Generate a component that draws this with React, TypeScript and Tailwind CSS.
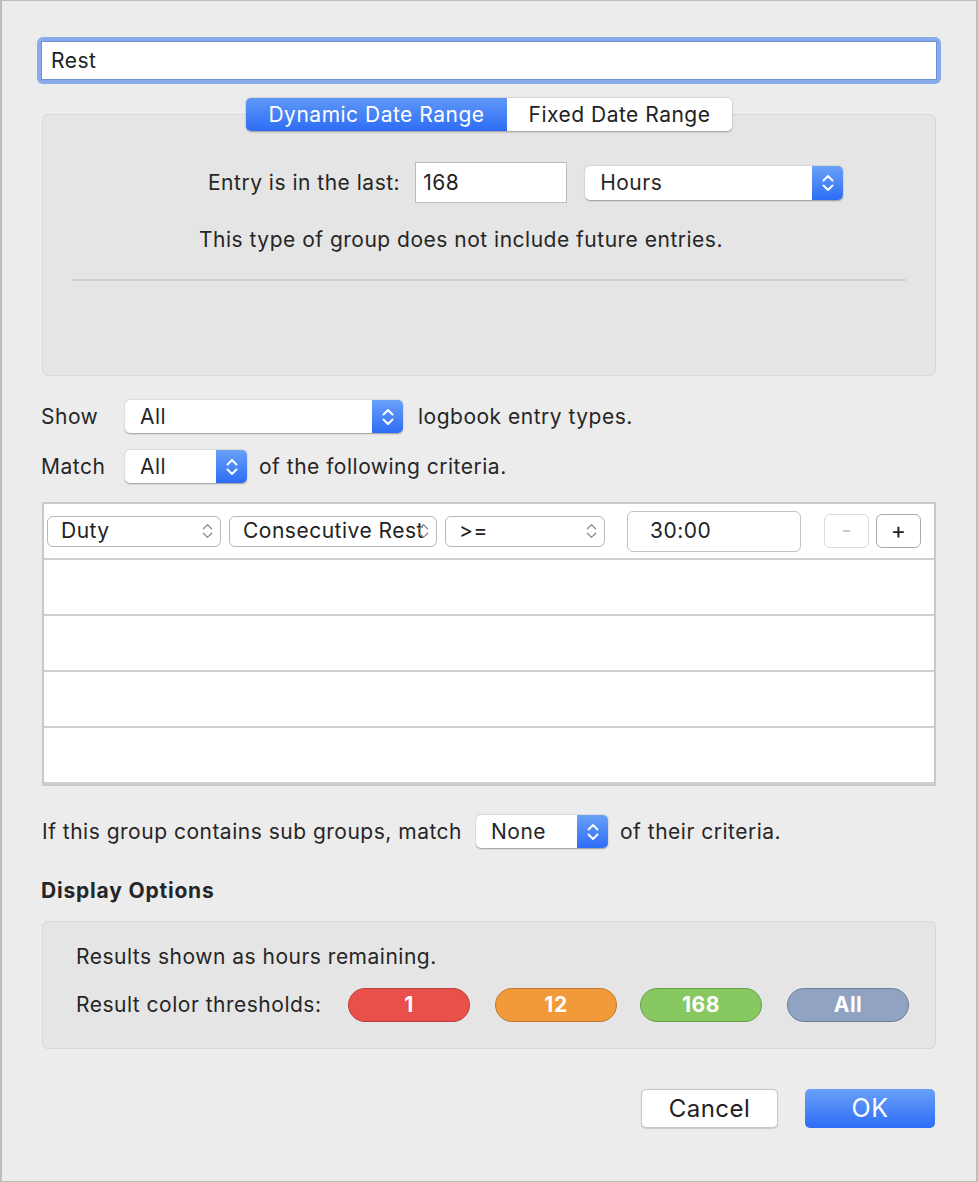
import React from 'react'

const font = { fontFamily: 'Inter, "Noto Sans", "Liberation Sans", sans-serif' }

function UpDown({ color = '#fff', w = 14, h = 22, sw = 1.9 }: { color?: string; w?: number; h?: number; sw?: number }) {
  return (
    <svg width={w} height={h} viewBox="0 0 14 22" fill="none">
      <path d="M2.5 8.5 L7 4 L11.5 8.5" stroke={color} strokeWidth={sw} strokeLinecap="round" strokeLinejoin="round" />
      <path d="M2.5 13.5 L7 18 L11.5 13.5" stroke={color} strokeWidth={sw} strokeLinecap="round" strokeLinejoin="round" />
    </svg>
  )
}

// popup button with the blue stepper on the right
function BluePopup({ label, className }: { label: string; className: string }) {
  return (
    <div className={`flex items-stretch rounded-[5px] bg-white shadow-[0_0.5px_1.5px_rgba(0,0,0,0.35)] ${className}`}>
      <div className="flex flex-1 items-center pl-[15px] text-[#262626]">{label}</div>
      <div className="flex w-[31px] items-center justify-center rounded-r-[5px] bg-gradient-to-b from-[#6aa0f8] to-[#2d6cf5]">
        <UpDown />
      </div>
    </div>
  )
}

// plain bordered popup used in the criteria rows
function PlainPopup({ label, className }: { label: string; className: string }) {
  return (
    <div className={`relative flex h-[31px] items-center rounded-[6px] border border-[#b8b8b8] bg-white pl-[13px] text-[#222] ${className}`}>
      <span className="whitespace-nowrap">{label}</span>
      <div className="absolute right-[6px] top-1/2 -translate-y-1/2">
        <UpDown color="#8e8e8e" w={13} h={20} sw={1.5} />
      </div>
    </div>
  )
}

function Pill({ label, bg, border }: { label: string; bg: string; border: string }) {
  return (
    <div className={`flex h-[34px] w-[122px] items-center justify-center rounded-full border font-bold text-white ${bg} ${border}`}>
      {label}
    </div>
  )
}

export default function App() {
  return (
    <div style={font} className="flex h-[1182px] w-[978px] flex-col border-x-2 border-y border-[#bdbdbd] bg-[#ececec] text-[21px] tracking-[0.5px] text-[#262626]">
      {/* name field */}
      <div className="mx-[35px] mt-[36px] rounded-[6px] bg-[#8aabeb] p-[4px]">
        <div className="flex h-[39px] items-center border border-[#6f8fd6] bg-white pl-[9px] text-[#222]">Rest</div>
      </div>

      {/* segmented control */}
      <div className="relative z-10 mt-[14px] flex justify-center">
        <div className="flex h-[33px] w-[486px] overflow-hidden rounded-[5px] shadow-[0_0.5px_2px_rgba(0,0,0,0.35)]">
          <div className="flex w-[261px] items-center justify-center bg-gradient-to-b from-[#5f97f7] to-[#2d6cf5] text-white">Dynamic Date Range</div>
          <div className="flex flex-1 items-center justify-center bg-white text-[#222]">Fixed Date Range</div>
        </div>
      </div>

      {/* date range box */}
      <div className="mx-[40px] -mt-[17px] flex h-[262px] flex-col rounded-[6px] border border-[#d8d8d8] bg-[#e5e5e5]">
        <div className="mt-[47px] flex items-center pl-[165px]">
          <span>Entry is in the last:</span>
          <div className="ml-[15px] flex h-[41px] w-[152px] items-center border border-[#bcbcbc] bg-white pl-[7px] text-[#222]">168</div>
          <BluePopup label="Hours" className="ml-[18px] h-[34px] w-[258px]" />
        </div>
        <div className="mt-[25px] pl-[156px] leading-[24px]">This type of group does not include future entries.</div>
        <div className="mx-[29px] mt-[27px] h-[2px] bg-[#cfcfcf]" />
      </div>

      {/* show / match */}
      <div className="mt-[24px] flex h-[33px] items-center pl-[39px]">
        <span className="w-[84px]">Show</span>
        <BluePopup label="All" className="h-[33px] w-[278px]" />
        <span className="ml-[15px]">logbook entry types.</span>
      </div>
      <div className="mt-[17px] flex h-[33px] items-center pl-[39px]">
        <span className="w-[84px]">Match</span>
        <BluePopup label="All" className="h-[33px] w-[122px]" />
        <span className="ml-[12px]">of the following criteria.</span>
      </div>

      {/* criteria table */}
      <div className="mx-[40px] mt-[19px] border-2 border-[#c9c9c9] bg-white">
        <div className="flex h-[56px] items-center border-b-2 border-[#cfcfcf] pl-[3px]">
          <PlainPopup label="Duty" className="w-[174px]" />
          <PlainPopup label="Consecutive Rest" className="ml-[8px] w-[208px]" />
          <PlainPopup label=">=" className="ml-[8px] w-[160px]" />
          <div className="ml-[22px] flex h-[41px] w-[174px] items-center rounded-[6px] border border-[#c3c3c3] bg-white pl-[22px] text-[#222]">30:00</div>
          <div className="ml-[23px] flex h-[34px] w-[45px] items-center justify-center rounded-[6px] border border-[#dadada] bg-white text-[#c4c4c4]">-</div>
          <div className="ml-[7px] flex h-[34px] w-[45px] items-center justify-center rounded-[6px] border border-[#a9a9a9] bg-white text-[23px] text-[#222]">+</div>
        </div>
        {[0, 1, 2, 3].map(i => (
          <div key={i} className="h-[56px] border-b-2 border-[#cfcfcf]" />
        ))}
      </div>

      {/* sub groups */}
      <div className="mt-[29px] flex h-[33px] items-center pl-[40px]">
        <span>If this group contains sub groups, match</span>
        <BluePopup label="None" className="ml-[14px] h-[33px] w-[132px]" />
        <span className="ml-[12px]">of their criteria.</span>
      </div>

      <div className="mt-[31px] pl-[39px] font-bold leading-[24px] tracking-[0.8px]">Display Options</div>

      {/* display options box */}
      <div className="mx-[40px] mt-[18px] flex h-[128px] flex-col rounded-[6px] border border-[#d8d8d8] bg-[#e5e5e5] pl-[33px]">
        <div className="mt-[23px] leading-[24px]">Results shown as hours remaining.</div>
        <div className="mt-[19px] flex items-center">
          <span className="w-[272px]">Result color thresholds:</span>
          <Pill label="1" bg="bg-[#e9504a]" border="border-[#b8413c]" />
          <div className="ml-[25px]"><Pill label="12" bg="bg-[#f19a39]" border="border-[#c27a2c]" /></div>
          <div className="ml-[23px]"><Pill label="168" bg="bg-[#88c860]" border="border-[#6a9f4a]" /></div>
          <div className="ml-[25px]"><Pill label="All" bg="bg-[#90a3c2]" border="border-[#6f7f99]" /></div>
        </div>
      </div>

      {/* buttons */}
      <div className="mt-[40px] flex justify-end pr-[41px]">
        <div className="flex h-[39px] w-[137px] items-center justify-center rounded-[5px] border border-[#c6c6c6] bg-white text-[24px] text-[#222] shadow-[0_0.5px_1px_rgba(0,0,0,0.15)]">Cancel</div>
        <div className="ml-[27px] flex h-[39px] w-[130px] items-center justify-center rounded-[5px] bg-gradient-to-b from-[#6aa0f8] to-[#2d6cf5] text-[25px] text-white">OK</div>
      </div>
    </div>
  )
}
